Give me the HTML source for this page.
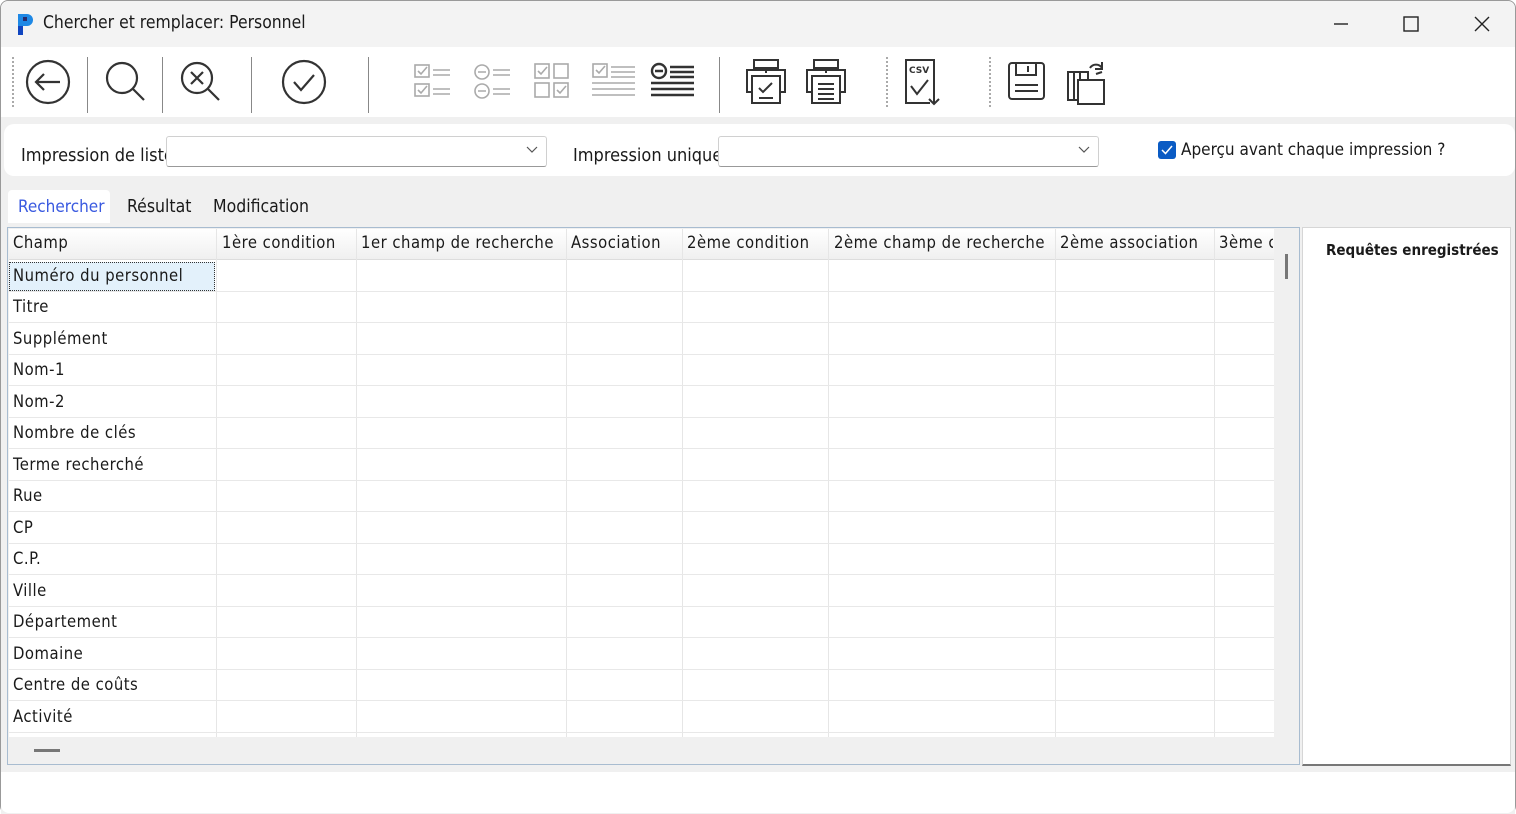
<!DOCTYPE html>
<html><head><meta charset="utf-8"><style>
*{box-sizing:border-box;margin:0;padding:0}
body{width:1516px;height:814px;overflow:hidden;background:#fff;font-family:"Liberation Sans","DejaVu Sans",sans-serif;position:relative;color:#1a1a1a}
.a{position:absolute}
.t{font-family:"DejaVu Sans Condensed","DejaVu Sans",sans-serif;font-size:15px}
.ic{position:absolute;fill:none;stroke:#333;stroke-width:2.2}
.ig{position:absolute;fill:none;stroke:#aaa;stroke-width:1.6}
.row{position:absolute;left:9px;width:1265px;height:31px;border-bottom:1px solid #e8e8e8}
.row span{position:absolute;left:4px;top:5px;font-family:"DejaVu Sans Condensed","DejaVu Sans",sans-serif;font-size:16.5px;letter-spacing:0.5px;white-space:nowrap}
.vl{position:absolute;top:229px;height:508px;width:1px;background:#e6e6e6}
.hc{position:absolute;top:233px;font-family:"DejaVu Sans Condensed","DejaVu Sans",sans-serif;font-size:16.5px;letter-spacing:0.5px;white-space:nowrap}
</style></head><body>
<div class="a" style="left:0;top:0;width:1516px;height:814px;border:1px solid #999;border-radius:8px"></div>
<div class="a" style="left:1px;top:1px;width:1514px;height:46px;background:#f3f3f3;border-radius:8px 8px 0 0"></div>
<svg class="a" style="left:14px;top:11px" width="22" height="26"><path d="M4 3h9a6 6 0 0 1 0 12h-4v9H4z" fill="#1e88e5"/><path d="M4 15h5v9H4z" fill="#1045c0"/><rect x="9" y="6" width="4" height="4" fill="#2a2a6a"/></svg>
<div class="a t" style="left:43px;top:13px;font-size:17.4px">Chercher et remplacer: Personnel</div>
<svg class="a" style="left:1330px;top:14px" width="170" height="20" fill="none" stroke="#222" stroke-width="1.4"><path d="M4 10h14"/><rect x="74" y="3" width="14" height="14"/><path d="M145 3l14 14M159 3l-14 14"/></svg>
<div class="a" style="left:1px;top:47px;width:1514px;height:70px;background:#fff"></div>
<div class="a" style="left:1px;top:117px;width:1514px;height:697px;background:#f0f0f0"></div>
<div class="a" style="left:12px;top:57px;height:50px;border-left:2px dotted #aaa"></div>
<div class="a" style="left:87px;top:57px;height:56px;width:1px;background:#888"></div>
<div class="a" style="left:162px;top:57px;height:56px;width:1px;background:#888"></div>
<div class="a" style="left:251px;top:57px;height:56px;width:1px;background:#888"></div>
<div class="a" style="left:368px;top:57px;height:56px;width:1px;background:#888"></div>
<div class="a" style="left:719px;top:57px;height:56px;width:1px;background:#888"></div>
<div class="a" style="left:886px;top:57px;height:50px;border-left:2px dotted #aaa"></div>
<div class="a" style="left:989px;top:57px;height:50px;border-left:2px dotted #aaa"></div>
<svg class="ic" style="left:24px;top:58px" width="48" height="48"><circle cx="24" cy="24" r="21"/><path d="M36 24H12M20 16l-8 8 8 8"/></svg>
<svg class="ic" style="left:102px;top:58px" width="48" height="48"><circle cx="20" cy="20" r="15"/><path d="M31 31l11 11"/></svg>
<svg class="ic" style="left:177px;top:58px" width="48" height="48"><circle cx="20" cy="20" r="15"/><path d="M31 31l11 11M14 14l12 12M26 14l-12 12"/></svg>
<svg class="ic" style="left:280px;top:58px" width="48" height="48"><circle cx="24" cy="24" r="21"/><path d="M14 24l7 8 13-15"/></svg>
<svg class="ig" style="left:412px;top:62px" width="42" height="40"><rect x="3" y="3" width="14" height="12"/><rect x="3" y="22" width="14" height="12"/><path d="M6 9l3 3 6-7M6 28l3 3 6-7M21 8h17M21 13h17M21 27h17M21 32h17"/></svg>
<svg class="ig" style="left:472px;top:62px" width="42" height="40"><circle cx="10" cy="10" r="7"/><circle cx="10" cy="29" r="7"/><path d="M6 10h8M6 29h8M21 8h17M21 13h17M21 27h17M21 32h17"/></svg>
<svg class="ig" style="left:532px;top:62px" width="42" height="40"><rect x="3" y="2" width="14" height="14"/><rect x="22" y="2" width="14" height="14"/><rect x="3" y="21" width="14" height="14"/><rect x="22" y="21" width="14" height="14"/><path d="M6 9l3 3 6-7M25 28l3 3 6-7"/></svg>
<svg class="ig" style="left:590px;top:62px" width="48" height="40"><rect x="3" y="2" width="14" height="13"/><path d="M6 8l3 3 6-7M21 5h24M21 10h24M21 15h24M2 21h43M2 27h43M2 33h43"/></svg>
<svg class="ic" style="left:649px;top:62px;stroke-width:2.4" width="48" height="40"><circle cx="10" cy="9" r="7"/><path d="M6 9h8M21 5h24M21 10h24M21 15h24M2 21h43M2 27h43M2 33h43"/></svg>
<svg class="ic" style="left:744px;top:58px;stroke-width:2" width="44" height="48"><rect x="10" y="2" width="24" height="8"/><path d="M8 34H3V12h38v22h-5"/><rect x="8" y="18" width="28" height="27"/><path d="M22 12v3M15 30l4 4 9-9M15 40h14"/></svg>
<svg class="ic" style="left:804px;top:58px;stroke-width:2" width="44" height="48"><rect x="10" y="2" width="24" height="8"/><path d="M8 34H3V12h38v22h-5"/><rect x="8" y="18" width="28" height="27"/><path d="M22 12v3M14 26h16M14 31h16M14 36h16M14 41h16"/></svg>
<svg class="ic" style="left:903px;top:58px;stroke-width:2" width="40" height="48"><path d="M27 45H3V2h28v30"/><path d="M31 32v14M26 41l5 5 5-5M8 28l6 8 11-14"/><text x="6" y="15" font-size="9" font-weight="bold" fill="#333" stroke="none" font-family="DejaVu Sans">CSV</text></svg>
<svg class="ic" style="left:1006px;top:60px;stroke-width:2" width="42" height="42"><rect x="3" y="3" width="35" height="36" rx="3"/><path d="M10 3v12h20V3M22 6v6M9 25h23M9 31h23"/></svg>
<svg class="ic" style="left:1064px;top:58px;stroke-width:2" width="44" height="48"><path d="M4 14h20v28H4zM10 14v28M16 14v28"/><rect x="14" y="22" width="26" height="24" fill="#fff"/><path d="M26 10a7 7 0 0 1 12 0M38 4v7h-7M32 16l6 -2"/></svg>
<div class="a" style="left:4px;top:124px;width:1511px;height:52px;background:#fff;border-radius:10px"></div>
<div class="a t" style="left:21px;top:145px;font-size:18px;width:146px;overflow:hidden;white-space:nowrap">Impression de liste</div>
<div class="a" style="left:166px;top:136px;width:381px;height:31px;border:1px solid #d0d0d0;border-bottom-color:#999;border-radius:3px;background:#fff"></div>
<svg class="a" style="left:525px;top:145px" width="14" height="10" fill="none" stroke="#555" stroke-width="1.2"><path d="M2 2l5 5 5-5"/></svg>
<div class="a t" style="left:573px;top:145px;font-size:18px;width:146px;overflow:hidden;white-space:nowrap">Impression unique</div>
<div class="a" style="left:718px;top:136px;width:381px;height:31px;border:1px solid #d0d0d0;border-bottom-color:#999;border-radius:3px;background:#fff"></div>
<svg class="a" style="left:1077px;top:145px" width="14" height="10" fill="none" stroke="#555" stroke-width="1.2"><path d="M2 2l5 5 5-5"/></svg>
<div class="a" style="left:1158px;top:141px;width:18px;height:18px;background:#0a5bc4;border-radius:3px"></div>
<svg class="a" style="left:1158px;top:141px" width="18" height="18" fill="none" stroke="#fff" stroke-width="1.5"><path d="M4 9l3.5 3.5L14 5"/></svg>
<div class="a t" style="left:1181px;top:140px;font-size:17px">Aperçu avant chaque impression ?</div>
<div class="a" style="left:8px;top:190px;width:102px;height:33px;background:#fff;border-radius:4px 4px 0 0"></div>
<div class="a t" style="left:18px;top:197px;font-size:17px;color:#3a5ae0">Rechercher</div>
<div class="a t" style="left:127px;top:197px;font-size:17.5px">Résultat</div>
<div class="a t" style="left:213px;top:197px;font-size:17.5px">Modification</div>
<div class="a" style="left:7px;top:227px;width:1293px;height:538px;border:1px solid #a8bcd0;background:#f0f0f0"></div>
<div class="a" style="left:9px;top:229px;width:1265px;height:508px;background:#fff"></div>
<div class="a" style="left:9px;top:229px;width:1265px;height:31px;background:linear-gradient(#fff,#f0f0f0);border-bottom:1px solid #ddd"></div>
<div class="vl" style="left:216px"></div><div class="vl" style="left:356px"></div><div class="vl" style="left:566px"></div><div class="vl" style="left:682px"></div><div class="vl" style="left:828px"></div><div class="vl" style="left:1055px"></div><div class="vl" style="left:1214px"></div>
<div class="hc" style="left:13px">Champ</div>
<div class="hc" style="left:222px">1ère condition</div>
<div class="hc" style="left:361px">1er champ de recherche</div>
<div class="hc" style="left:571px">Association</div>
<div class="hc" style="left:687px">2ème condition</div>
<div class="hc" style="left:834px">2ème champ de recherche</div>
<div class="hc" style="left:1060px">2ème association</div>
<div class="hc" style="left:1219px;width:54px;overflow:hidden">3ème condition</div>
<div class="a" style="left:9px;top:262px;width:206px;height:29px;background:#e3f1fb;border:1px dotted #333"></div>
<div class="row" style="top:261px"><span>Numéro du personnel</span></div>
<div class="row" style="top:292px"><span>Titre</span></div>
<div class="row" style="top:324px"><span>Supplément</span></div>
<div class="row" style="top:355px"><span>Nom-1</span></div>
<div class="row" style="top:387px"><span>Nom-2</span></div>
<div class="row" style="top:418px"><span>Nombre de clés</span></div>
<div class="row" style="top:450px"><span>Terme recherché</span></div>
<div class="row" style="top:481px"><span>Rue</span></div>
<div class="row" style="top:513px"><span>CP</span></div>
<div class="row" style="top:544px"><span>C.P.</span></div>
<div class="row" style="top:576px"><span>Ville</span></div>
<div class="row" style="top:607px"><span>Département</span></div>
<div class="row" style="top:639px"><span>Domaine</span></div>
<div class="row" style="top:670px"><span>Centre de coûts</span></div>
<div class="row" style="top:702px"><span>Activité</span></div>
<div class="a" style="left:1285px;top:254px;width:3px;height:25px;background:#777"></div>
<div class="a" style="left:34px;top:749px;width:26px;height:3px;background:#777"></div>
<div class="a" style="left:1302px;top:227px;width:209px;height:539px;background:#fff;border:1px solid #d6d6d6;border-bottom:2px solid #777"></div>
<div class="a t" style="left:1326px;top:241px;font-size:15px;font-weight:bold;white-space:nowrap">Requêtes enregistrées</div>
<div class="a" style="left:1px;top:772px;width:1514px;height:41px;background:#fff;border-radius:0 0 8px 8px"></div>
</body></html>
